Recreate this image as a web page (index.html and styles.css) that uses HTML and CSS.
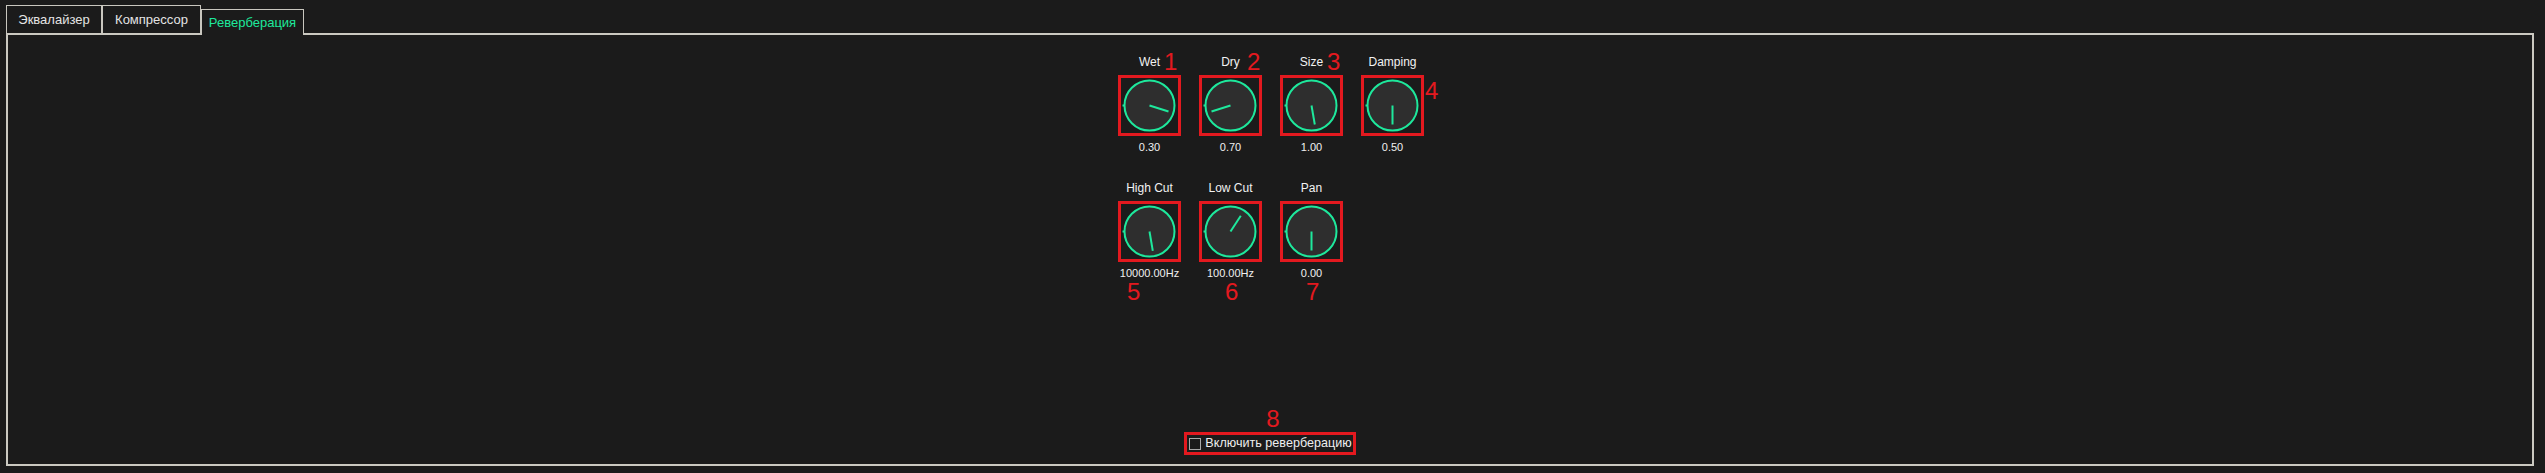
FILE: index.html
```html
<!DOCTYPE html>
<html lang="ru">
<head>
<meta charset="utf-8">
<title>Реверберация</title>
<link rel="stylesheet" href="styles.css">
</head>
<body>
<div class="app">
  <div class="tabbar">
    <div class="tab t1">Эквалайзер</div>
    <div class="tab t2">Компрессор</div>
    <div class="tab t3 active">Реверберация</div>
  </div>
  <div class="panel">
    <div class="knobs">
      <div class="cell">
        <div class="lbl">Wet</div>
        <div class="frame"><svg class="knob" width="57" height="55" viewBox="-28.5 -27.5 57 55"><circle r="25"/><path class="tick" d="M-27 0h2"/><line x2="19" y2="6"/></svg></div>
        <div class="val">0.30</div>
        <span class="anno a1">1</span>
      </div>
      <div class="cell">
        <div class="lbl">Dry</div>
        <div class="frame"><svg class="knob" width="57" height="55" viewBox="-28.5 -27.5 57 55"><circle r="25"/><path class="tick" d="M-27 0h2"/><line x2="-19" y2="6"/></svg></div>
        <div class="val">0.70</div>
        <span class="anno a2">2</span>
      </div>
      <div class="cell">
        <div class="lbl">Size</div>
        <div class="frame"><svg class="knob" width="57" height="55" viewBox="-28.5 -27.5 57 55"><circle r="25"/><path class="tick" d="M-27 0h2"/><line x2="3.3" y2="19"/></svg></div>
        <div class="val">1.00</div>
        <span class="anno a3">3</span>
      </div>
      <div class="cell">
        <div class="lbl">Damping</div>
        <div class="frame"><svg class="knob" width="57" height="55" viewBox="-28.5 -27.5 57 55"><circle r="25"/><path class="tick" d="M-27 0h2"/><line x2="0" y2="19"/></svg></div>
        <div class="val">0.50</div>
        <span class="anno a4">4</span>
      </div>
      <div class="cell">
        <div class="lbl">High Cut</div>
        <div class="frame"><svg class="knob" width="57" height="55" viewBox="-28.5 -27.5 57 55"><circle r="25"/><path class="tick" d="M-27 0h2"/><line x2="3.3" y2="19.3"/></svg></div>
        <div class="val">10000.00Hz</div>
        <span class="anno a5">5</span>
      </div>
      <div class="cell">
        <div class="lbl">Low Cut</div>
        <div class="frame"><svg class="knob" width="57" height="55" viewBox="-28.5 -27.5 57 55"><circle r="25"/><path class="tick" d="M-27 0h2"/><line x2="10.3" y2="-15.7"/></svg></div>
        <div class="val">100.00Hz</div>
        <span class="anno a6">6</span>
      </div>
      <div class="cell">
        <div class="lbl">Pan</div>
        <div class="frame"><svg class="knob" width="57" height="55" viewBox="-28.5 -27.5 57 55"><circle r="25"/><path class="tick" d="M-27 0h2"/><line x2="0" y2="19"/></svg></div>
        <div class="val">0.00</div>
        <span class="anno a7">7</span>
      </div>
    </div>
    <label class="check"><span class="box"></span><span class="ctext">Включить реверберацию</span><span class="anno a8">8</span></label>
  </div>
</div>
</body>
</html>
```

FILE: styles.css
```css
html, body {
  margin: 0;
  padding: 0;
  background: #1b1b1b;
}

body {
  font-family: "Liberation Sans", Arial, sans-serif;
  color: #eeeeee;
}

.app {
  box-sizing: border-box;
  height: 473px;
  padding: 5px 11px 7px 6px;
  display: flex;
  flex-direction: column;
}

.tabbar {
  display: flex;
  align-items: flex-end;
  height: 28px;
  flex: none;
}

.tab {
  box-sizing: border-box;
  height: 28px;
  border: 1px solid #c9c7bf;
  border-bottom: none;
  font-size: 13px;
  line-height: 27px;
  text-align: center;
  color: #e4e4e4;
  background: #1b1b1b;
}

.t1 { width: 96px; }
.t2 { width: 99px; margin-left: 0; }
.t3 { width: 103px; }

.tab.active {
  height: 26px;
  line-height: 25px;
  margin-bottom: -2px;
  color: #1ee89c;
  position: relative;
  z-index: 1;
}

.panel {
  flex: 1;
  border: 2px solid #cbc9c1;
  padding: 20px 0 9px 0;
  display: flex;
  flex-direction: column;
  align-items: center;
  min-height: 0;
}

.knobs {
  display: grid;
  grid-template-columns: repeat(4, 81px);
  row-gap: 27px;
  padding-left: 2px;
}

.cell {
  position: relative;
  display: flex;
  flex-direction: column;
  align-items: center;
}

.lbl {
  font-size: 12px;
  line-height: 14px;
  height: 14px;
  margin-bottom: 6px;
  white-space: nowrap;
  color: #f2f2f2;
}

.frame {
  box-sizing: border-box;
  width: 63px;
  height: 61px;
  border: 3px solid #e3191f;
  display: flex;
  align-items: center;
  justify-content: center;
}

.knob {
  display: block;
}

.knob circle {
  fill: #2e2e2e;
  stroke: #1ee89c;
  stroke-width: 2;
}

.knob line,
.knob .tick {
  stroke: #1ee89c;
  stroke-width: 2;
  fill: none;
}

.val {
  margin-top: 5px;
  font-size: 11px;
  line-height: 13px;
  white-space: nowrap;
  color: #f0f0f0;
}

.anno {
  position: absolute;
  font-family: "Liberation Sans", Arial, sans-serif;
  font-size: 24px;
  line-height: 24px;
  color: #e3191f;
}

.a1 { left: 55px; top: -5px; }
.a2 { left: 57px; top: -5px; }
.a3 { left: 56px; top: -5px; }
.a4 { left: 73px; top: 24px; }
.a5 { left: 18px; top: 99px; }
.a6 { left: 35px; top: 99px; }
.a7 { left: 35px; top: 99px; }
.a8 { left: 79px; top: -28px; }

.check {
  position: relative;
  margin-top: auto;
  display: inline-flex;
  align-items: center;
  border: 3px solid #e3191f;
  padding: 0 1px 0 2px;
  height: 23px;
  box-sizing: border-box;
}

.box {
  box-sizing: border-box;
  width: 12px;
  height: 12px;
  border: 1px solid #a8a8a8;
  background: #1b1b1b;
  margin-right: 4px;
}

.ctext {
  font-size: 12.6px;
  line-height: 17px;
  color: #eeeeee;
  white-space: nowrap;
}
```
